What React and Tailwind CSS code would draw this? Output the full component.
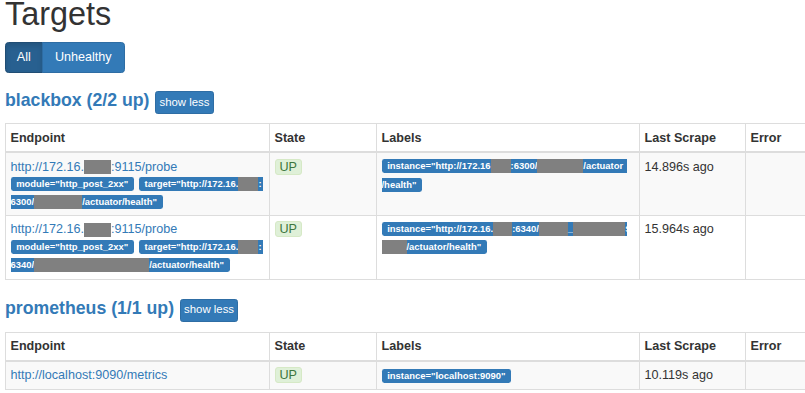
import React from 'react'

// redacted block inside text
const Gray = ({ className = '' }) => <span className={`inline-block bg-[#808080] ${className}`} />

const Badge = ({ children, className = 'rounded-[2.4px] px-[5.7px]' }) => (
  <span className={`inline-flex items-center h-[14px] bg-[#337ab7] text-white font-bold text-[9.45px] leading-none whitespace-nowrap overflow-hidden ${className}`}>
    {children}
  </span>
)

const Up = () => (
  <span className="inline-block h-[16px] px-[4px] border border-[#d6e9c6] bg-[#dff0d8] text-[#3c763d] text-[12.6px] leading-[14px] rounded-[3px]">
    UP
  </span>
)

const Th = ({ children }) => (
  <th className="text-left font-bold px-[4.5px] py-[4.5px] leading-[18px] border border-[#ddd] border-b-2 align-bottom">
    {children}
  </th>
)

const Td = ({ children }) => (
  <td className="px-[4.5px] py-[4.5px] leading-[18px] border border-[#ddd] align-top">{children}</td>
)

const Heading = ({ title }) => (
  <div className="flex items-start gap-[6px]">
    <span className="text-[#337ab7] font-bold text-[17.7px] leading-[19px]">{title}</span>
    <button className="h-[23px] px-[3px] bg-[#337ab7] border border-[#2e6da4] text-white text-[11.4px] rounded-[2.7px]">
      show less
    </button>
  </div>
)

const TableHead = () => (
  <>
    <colgroup>
      <col className="w-[264px]" />
      <col className="w-[107px]" />
      <col className="w-[263px]" />
      <col className="w-[106px]" />
      <col />
    </colgroup>
    <thead>
      <tr>
        <Th>Endpoint</Th>
        <Th>State</Th>
        <Th>Labels</Th>
        <Th>Last Scrape</Th>
        <Th>Error</Th>
      </tr>
    </thead>
  </>
)

const Link = ({ children }) => <div className="text-[#337ab7] whitespace-nowrap">{children}</div>

export default function App() {
  return (
    <div className="w-[805px] h-[393px] overflow-hidden bg-white px-[5px] text-[#333] text-[12.6px] font-['Liberation_Sans',Arial,sans-serif]">
      <h1 className="-mt-[2px] text-[32.4px] leading-[32px] font-normal">Targets</h1>

      <div className="mt-[12px] flex">
        <button className="h-[31px] px-[10.8px] bg-[#286090] border border-[#204d74] text-white text-[12.6px] rounded-l-[3.6px] shadow-[inset_0_3px_5px_rgba(0,0,0,0.125)]">
          All
        </button>
        <button className="h-[31px] -ml-px px-[12.3px] bg-[#337ab7] border border-[#2e6da4] text-white text-[12.6px] rounded-r-[3.6px]">
          Unhealthy
        </button>
      </div>

      <div className="mt-[18px]">
        <Heading title="blackbox (2/2 up)" />
      </div>

      <table className="mt-[9px] w-[860px] table-fixed border-collapse">
        <TableHead />
        <tbody>
          <tr className="bg-[#f9f9f9] h-[63px]">
            <Td>
              <Link>
                http://172.16.<Gray className="w-[27px] h-[14px] align-middle" />:9115/probe
              </Link>
              <div className="mt-[1.5px] flex flex-col gap-[4px]">
                <div className="flex gap-[5px]">
                  <Badge>module="http_post_2xx"</Badge>
                  <Badge className="pl-[5.7px] pr-[1px] rounded-l-[2.4px]">
                    target="http://172.16.<Gray className="self-stretch w-[20px] shrink-0" />:
                  </Badge>
                </div>
                <div className="flex">
                  <Badge className="pr-[5.7px] rounded-r-[2.4px]">
                    6300/<Gray className="self-stretch w-[48px]" />/actuator/health"
                  </Badge>
                </div>
              </div>
            </Td>
            <Td>
              <Up />
            </Td>
            <Td>
              <div className="mt-[1.5px] flex flex-col gap-[4.5px]">
                <div className="flex">
                  <Badge className="w-[245px] pl-[5.7px] rounded-l-[2.4px]">
                    instance="http://172.16<Gray className="self-stretch w-[20px] shrink-0" />:6300/
                    <Gray className="self-stretch w-[46px] shrink-0" />/actuator
                  </Badge>
                </div>
                <div className="flex">
                  <Badge className="pr-[5.7px] rounded-r-[2.4px]">/health"</Badge>
                </div>
              </div>
            </Td>
            <Td>14.896s ago</Td>
            <Td></Td>
          </tr>
          <tr className="bg-white h-[64px]">
            <Td>
              <Link>
                http://172.16.<Gray className="w-[27px] h-[14px] align-middle" />:9115/probe
              </Link>
              <div className="mt-[1.5px] flex flex-col gap-[4px]">
                <div className="flex gap-[5px]">
                  <Badge>module="http_post_2xx"</Badge>
                  <Badge className="pl-[5.7px] pr-[1px] rounded-l-[2.4px]">
                    target="http://172.16.<Gray className="self-stretch w-[20px] shrink-0" />:
                  </Badge>
                </div>
                <div className="flex">
                  <Badge className="pr-[5.7px] rounded-r-[2.4px]">
                    6340/<Gray className="self-stretch w-[115px]" />/actuator/health"
                  </Badge>
                </div>
              </div>
            </Td>
            <Td>
              <Up />
            </Td>
            <Td>
              <div className="mt-[1.5px] flex flex-col gap-[4.5px]">
                <div className="flex">
                  <Badge className="w-[245px] pl-[5.7px] rounded-l-[2.4px]">
                    instance="http://172.16.<Gray className="self-stretch w-[19px] shrink-0" />:6340/
                    <Gray className="self-stretch w-[29px] shrink-0" />_
                    <Gray className="self-stretch w-[52px] shrink-0" />S
                  </Badge>
                </div>
                <div className="flex">
                  <Badge className="pr-[5.7px] rounded-r-[2.4px]">
                    <Gray className="self-stretch w-[25px]" />/actuator/health"
                  </Badge>
                </div>
              </div>
            </Td>
            <Td>15.964s ago</Td>
            <Td></Td>
          </tr>
        </tbody>
      </table>

      <div className="mt-[19px]">
        <Heading title="prometheus (1/1 up)" />
      </div>

      <table className="mt-[10px] w-[860px] table-fixed border-collapse">
        <TableHead />
        <tbody>
          <tr className="bg-[#f9f9f9]">
            <Td>
              <Link>http://localhost:9090/metrics</Link>
            </Td>
            <Td>
              <Up />
            </Td>
            <Td>
              <div className="mt-[3px] flex">
                <Badge>instance="localhost:9090"</Badge>
              </div>
            </Td>
            <Td>10.119s ago</Td>
            <Td></Td>
          </tr>
        </tbody>
      </table>
    </div>
  )
}
